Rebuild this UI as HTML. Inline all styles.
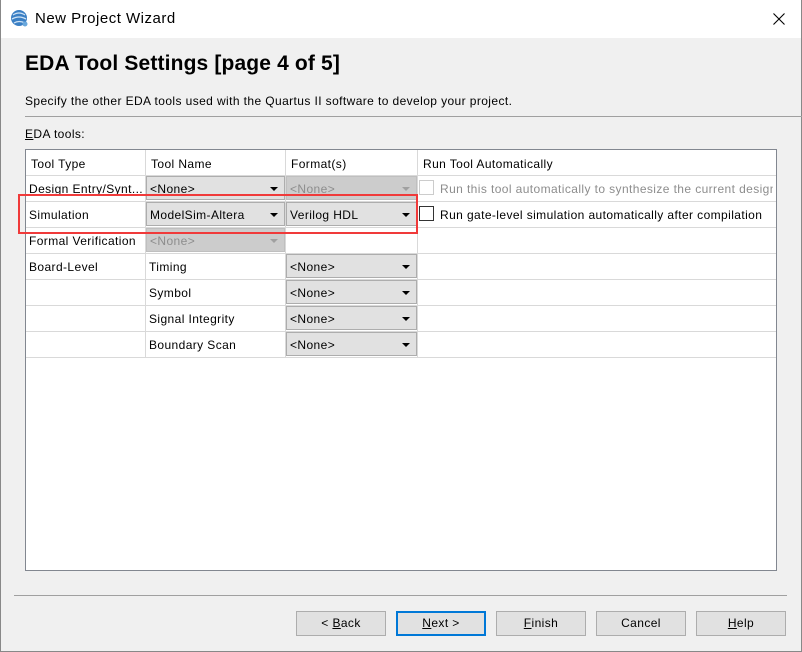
<!DOCTYPE html>
<html><head><meta charset="utf-8"><style>
*{margin:0;padding:0;box-sizing:border-box}
body{width:802px;height:652px;background:#f0f0f0;font-family:"Liberation Sans",sans-serif;font-size:12px;color:#000;position:relative;overflow:hidden;letter-spacing:0.4px}
.a{position:absolute;white-space:nowrap}
.cb{position:absolute;background:#e1e1e1;border:1px solid #adadad;padding:5px 0 0 3px;height:24px;overflow:hidden}
.cb.d{background:#cccccc;border-color:#bfbfbf;color:#8d8d8d}
.cb:after{content:"";position:absolute;right:6px;top:10px;border-left:4px solid transparent;border-right:4px solid transparent;border-top:4px solid #000}
.cb.d:after{border-top-color:#a0a0a0}
.hl{position:absolute;left:26px;width:750px;height:1px;background:#d9d9d9}
.vl{position:absolute;width:1px;background:#d9d9d9}
.btn{position:absolute;top:611px;width:90px;height:25px;background:#e1e1e1;border:1px solid #adadad;text-align:center;line-height:23px}
u{text-decoration:underline}
</style></head><body>
<div class="a" style="left:0;top:0;width:802px;height:38px;background:#fff"></div>
<div class="a" style="left:0;top:0;width:1px;height:652px;background:#888"></div>
<div class="a" style="left:801px;top:0;width:1px;height:652px;background:#888"></div>
<div class="a" style="left:0;top:651px;width:802px;height:1px;background:#888"></div>
<svg class="a" style="left:10px;top:9px" width="19" height="19" viewBox="0 0 19 19"><circle cx="9" cy="9" r="8" fill="#3b7fc4"/><path d="M3 6 Q9 2 15 6 M2 10 Q9 6 16 10 M4 14 Q9 11 15 14" stroke="#cfe3f5" stroke-width="1.3" fill="none"/><circle cx="15" cy="15" r="2.5" fill="#6aa8dc"/></svg>
<div class="a" style="left:35px;top:10px;font-size:15px;letter-spacing:0.5px">New Project Wizard</div>
<svg class="a" style="left:773px;top:13px" width="12" height="12" viewBox="0 0 12 12"><path d="M0.5 0.5 L11.5 11.5 M11.5 0.5 L0.5 11.5" stroke="#000" stroke-width="1.1"/></svg>
<div class="a" style="left:25px;top:52px;font-size:21px;font-weight:bold;letter-spacing:0.15px">EDA Tool Settings [page 4 of 5]</div>
<div class="a" style="left:25px;top:94px">Specify the other EDA tools used with the Quartus II software to develop your project.</div>
<div class="a" style="left:25px;top:116px;width:777px;height:1px;background:#a0a0a0"></div>
<div class="a" style="left:25px;top:127px"><u>E</u>DA tools:</div>
<div class="a" style="left:25px;top:149px;width:752px;height:422px;background:#fff;border:1px solid #828790"></div>
<div class="hl" style="top:175px"></div><div class="hl" style="top:201px"></div><div class="hl" style="top:227px"></div><div class="hl" style="top:253px"></div><div class="hl" style="top:279px"></div><div class="hl" style="top:305px"></div><div class="hl" style="top:331px"></div><div class="hl" style="top:357px"></div>
<div class="vl" style="left:145px;top:150px;height:207px"></div>
<div class="vl" style="left:285px;top:150px;height:207px"></div>
<div class="vl" style="left:417px;top:150px;height:207px"></div>
<div class="a" style="left:31px;top:157px">Tool Type</div>
<div class="a" style="left:151px;top:157px">Tool Name</div>
<div class="a" style="left:291px;top:157px">Format(s)</div>
<div class="a" style="left:423px;top:157px">Run Tool Automatically</div>
<div class="a" style="left:29px;top:182px;width:116px;overflow:hidden">Design Entry/Synt...</div>
<div class="cb" style="left:146px;top:176px;width:139px">&lt;None&gt;</div>
<div class="cb d" style="left:286px;top:176px;width:131px">&lt;None&gt;</div>
<div class="a" style="left:419px;top:180px;width:15px;height:15px;border:1px solid #ccc;background:#fff"></div>
<div class="a" style="left:440px;top:182px;color:#8d8d8d;width:333px;overflow:hidden">Run this tool automatically to synthesize the current design</div>
<div class="a" style="left:29px;top:208px">Simulation</div>
<div class="cb" style="left:146px;top:202px;width:139px">ModelSim-Altera</div>
<div class="cb" style="left:286px;top:202px;width:131px">Verilog HDL</div>
<div class="a" style="left:419px;top:206px;width:15px;height:15px;border:1px solid #333;background:#fff"></div>
<div class="a" style="left:440px;top:208px">Run gate-level simulation automatically after compilation</div>
<div class="a" style="left:29px;top:234px">Formal Verification</div>
<div class="cb d" style="left:146px;top:228px;width:139px">&lt;None&gt;</div>
<div class="a" style="left:29px;top:260px">Board-Level</div>
<div class="a" style="left:149px;top:260px">Timing</div>
<div class="a" style="left:149px;top:286px">Symbol</div>
<div class="a" style="left:149px;top:312px">Signal Integrity</div>
<div class="a" style="left:149px;top:338px">Boundary Scan</div>
<div class="cb" style="left:286px;top:254px;width:131px">&lt;None&gt;</div>
<div class="cb" style="left:286px;top:280px;width:131px">&lt;None&gt;</div>
<div class="cb" style="left:286px;top:306px;width:131px">&lt;None&gt;</div>
<div class="cb" style="left:286px;top:332px;width:131px">&lt;None&gt;</div>
<div class="a" style="left:18px;top:194px;width:400px;height:40px;border:2px solid #f03a3a"></div>
<div class="a" style="left:14px;top:595px;width:773px;height:1px;background:#a0a0a0"></div>
<div class="btn" style="left:296px">&lt; <u>B</u>ack</div>
<div class="btn" style="left:396px;border:2px solid #0078d7;line-height:21px"><u>N</u>ext &gt;</div>
<div class="btn" style="left:496px"><u>F</u>inish</div>
<div class="btn" style="left:596px">Cancel</div>
<div class="btn" style="left:696px"><u>H</u>elp</div>
</body></html>
